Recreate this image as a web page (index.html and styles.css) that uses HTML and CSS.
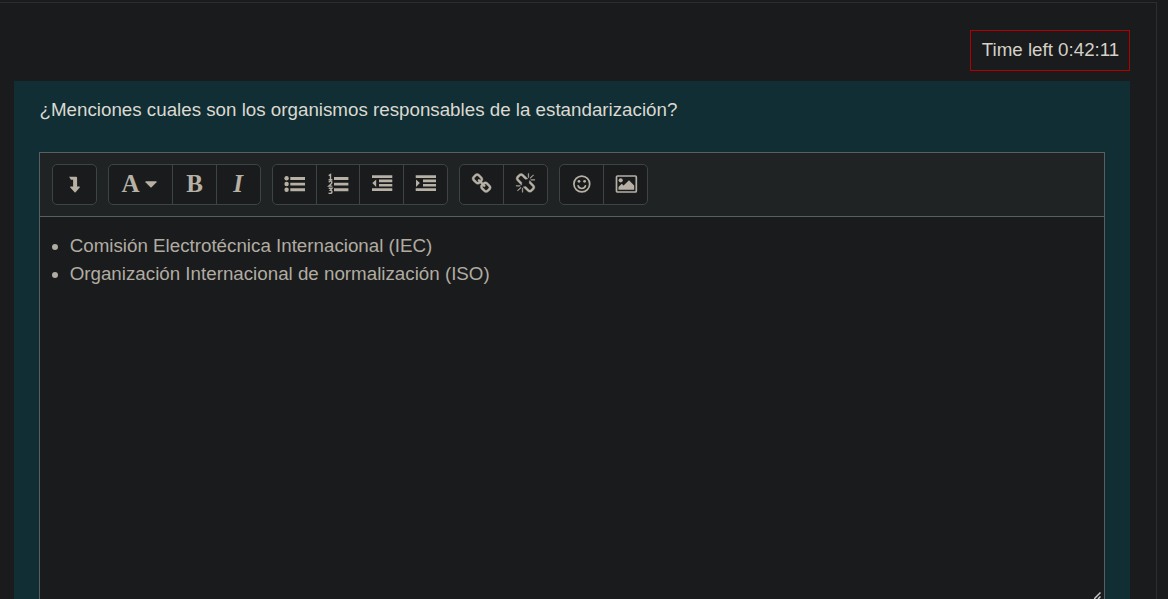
FILE: index.html
```html
<!DOCTYPE html>
<html lang="es">
<head>
<meta charset="utf-8">
<title>Quiz</title>
<link rel="stylesheet" href="styles.css">
</head>
<body>
<main class="page">
  <div class="timer-row"><div class="timer">Time left 0:42:11</div></div>
  <section class="question">
    <p class="prompt">¿Menciones cuales son los organismos responsables de la estandarización?</p>
    <div class="editor">
      <div class="toolbar">
        <div class="group">
          <button class="tool"><svg class="icon" viewBox="0 0 23 23"><path transform="translate(-.9 -.2)" d="M7 4h7q1 0 1 1v8.800h2.200q1 .2.4 1l-4.100 4.600q-.5.5-1 0L8.200 14.800q-.5-.8.4-1H11V6.900H8.800z"/></svg></button>
        </div>
        <div class="group">
          <button class="tool style-menu"><span class="letter">A</span><svg class="caret" viewBox="0 0 12 7"><path d="M.8.300h10.500q.6.300.2.900L6.600 6.200q-.6.5-1.200 0L.500 1.200Q.1.600.8.300z"/></svg></button>
          <button class="tool text-tool"><span class="letter">B</span></button>
          <button class="tool text-tool"><span class="letter italic">I</span></button>
        </div>
        <div class="group">
          <button class="tool"><svg class="icon" viewBox="0 0 23 23"><circle cx="3.600" cy="5.300" r="2.200"/><circle cx="3.600" cy="11" r="2.200"/><circle cx="3.600" cy="16.700" r="2.200"/><path d="M7.300 4h14.700v2.900H7.300zM7.300 9.700h14.700v2.900H7.300zM7.300 15.300h14.700v2.900H7.300z"/></svg></button>
          <button class="tool narrow"><svg class="icon" viewBox="0 0 23 23"><path d="M7 4h14.400v2.900H7zM7 9.700h14.400v2.900H7zM7 15.300h14.400v2.900H7z"/><path class="digits" d="M1.700 2.700 3.500 1.600V6.500M1.600 6.700h3.800M1.700 9.200Q3.600 7.400 4.800 8.700 5.400 10 1.900 13.100H5.300M1.700 15.300H5L3.300 17.300Q5.100 17.400 5 19 4.500 21 1.500 20.100"/></svg></button>
          <button class="tool"><svg class="icon" viewBox="0 0 23 23"><path d="M2 2.300h20.300v2.700H2zM9 6.600h13.300v2.700H9zM9 10.900h13.300v2.700H9zM2 15.200h20.300v2.700H2zM6.200 6.400v7.500L2.300 10.100z"/></svg></button>
          <button class="tool"><svg class="icon" viewBox="0 0 23 23"><path d="M1.700 2.300H22v2.700H1.700zM9 6.600h13v2.700H9zM9 10.900h13v2.700H9zM1.700 15.200H22v2.700H1.700zM2 6.400v7.500l3.900-3.800z"/></svg></button>
        </div>
        <div class="group">
          <button class="tool"><svg class="icon chain" viewBox="0 0 23 23"><path transform="translate(1.900 .3) scale(.0117)" d="M1456 1216q0-40-28-68l-208-208q-28-28-68-28-42 0-72 32 3 3 19 18.500t21.500 21.500 15 19 13 25.500 3.500 27.500q0 40-28 68t-68 28q-15 0-27.500-3.500t-25.500-13-19-15-21.500-21.500-18.500-19q-33 31-33 73 0 40 28 68l206 207q27 27 68 27 40 0 68-26l147-146q28-28 28-67zM753 511q0-40-28-68l-206-207q-28-28-68-28-39 0-68 27l-147 146q-28 28-28 67 0 40 28 68l208 208q27 27 68 27 42 0 72-31-3-3-19-18.500t-21.500-21.500-15-19-13-25.500-3.500-27.500q0-40 28-68t68-28q15 0 27.500 3.500t25.500 13 19 15 21.500 21.500 18.500 19q33-31 33-73zM1648 1216q0 120-85 203l-147 146q-83 83-203 83-121 0-204-85l-206-207q-83-83-83-203 0-123 88-209l-88-88q-86 88-208 88-120 0-204-84l-208-208q-84-84-84-204t85-203l147-146q83-83 203-83 121 0 204 85l206 207q83 83 83 203 0 123-88 209l88 88q86-88 208-88 120 0 204 84l208 208q84 84 84 204z"/></svg></button>
          <button class="tool"><svg class="icon chain" viewBox="0 0 23 23"><path transform="translate(1.200 .3) scale(.0115)" d="M503 1271l-256 256q-10 9-23 9-12 0-23-9-9-10-9-23t9-23l256-256q10-9 23-9t23 9q9 10 9 23t-9 23zm169 41v320q0 14-9 23t-23 9-23-9-9-23v-320q0-14 9-23t23-9 23 9 9 23zm-224-224q0 14-9 23t-23 9h-320q-14 0-23-9t-9-23 9-23 23-9h320q14 0 23 9t9 23zm1264 128q0 120-85 203l-147 146q-83 83-203 83-121 0-204-85l-334-335q-21-21-42-56l239-18 273 274q28 28 68 27.500t68-27.500l147-146q28-28 28-67 0-40-28-68l-274-275 18-239q35 21 56 42l336 336q84 86 84 204zm-617-724l-239 18-273-274q-28-28-68-28-39 0-68 27l-147 146q-28 28-28 67 0 40 28 68l274 274-18 240q-35-21-56-42l-336-336q-84-86-84-204 0-120 85-203l147-146q83-83 203-83 121 0 204 85l334 335q21 21 42 56zm633 84q0 14-9 23t-23 9h-320q-14 0-23-9t-9-23 9-23 23-9h320q14 0 23 9t9 23zm-544-544v320q0 14-9 23t-23 9-23-9-9-23v-320q0-14 9-23t23-9 23 9 9 23zm407 151l-256 256q-11 9-23 9t-23-9q-9-10-9-23t9-23l256-256q10-9 23-9t23 9q9 10 9 23t-9 23z"/></svg></button>
        </div>
        <div class="group">
          <button class="tool"><svg class="icon" viewBox="0 0 23 23"><circle class="line" cx="11.800" cy="11" r="7.900"/><circle cx="9" cy="8.300" r="1.400"/><circle cx="14.600" cy="8.300" r="1.400"/><path class="line" d="M8.100 12.800Q9 15.500 11.800 15.500T15.500 12.800"/></svg></button>
          <button class="tool"><svg class="icon" viewBox="0 0 23 23"><rect class="line" x="2.500" y="3" width="19.800" height="16" rx="1"/><circle cx="6.700" cy="7.300" r="2.100"/><path d="M4.500 16.700V14l3.200-3.200 1.900 1.800 5.400-5.300 5.200 5.200v4.200z"/></svg></button>
        </div>
      </div>
      <div class="content">
        <ul class="answers">
          <li>Comisión Electrotécnica Internacional (IEC)</li>
          <li>Organización Internacional de normalización (ISO)</li>
        </ul>
        <svg class="grip" viewBox="0 0 7 7"><path d="M0 7 6.500.5M4 7 6.500 4.500"/></svg>
      </div>
    </div>
  </section>
</main>
</body>
</html>
```
FILE: styles.css
```css
* { box-sizing: border-box; }
body {
  margin: 0;
  padding-top: 2px;
  height: 599px;
  overflow: hidden;
  background: #1a1b1c;
  color: #d5d1c8;
  font: 18.75px/28px "Liberation Sans", Arial, sans-serif;
}
.page {
  width: 1157px;
  height: 597px;
  padding: 27px 26px 0 14px;
  border: 1px solid #2b2d2e;
  border-left: 0;
  border-bottom: 0;
}
.timer-row { display: flex; justify-content: flex-end; height: 51px; }
.timer {
  width: 160px;
  height: 41px;
  padding: 5px 0 0 1px;
  border: 1px solid #b20000;
  text-align: center;
  white-space: nowrap;
}
.question {
  height: 518px;
  padding: 15px 25px 0;
  background: #102e33;
}
.prompt { margin: 0 0 28px; padding-left: .5px; color: #dcd9d2; }
.editor {
  height: 447px;
  border: 1px solid #566062;
  border-bottom: 0;
  background: #1a1b1c;
}
.toolbar {
  display: flex;
  gap: 11px;
  height: 64px;
  padding: 11px 12px;
  background: #1f2324;
  border-bottom: 1px solid #566062;
}
.group {
  display: flex;
  height: 41px;
  border: 1px solid #3d4444;
  border-radius: 5px;
  background: #1a1b1c;
}
.tool {
  display: flex;
  align-items: center;
  width: 43px;
  height: 39px;
  padding: 0 0 0 10px;
  border: 0;
  background: none;
  color: #b6b0a5;
}
.tool + .tool { width: 44px; border-left: 1px solid #3d4444; }
.tool + .tool.narrow { width: 43px; }
.group .tool.narrow + .tool { width: 44px; }
.icon { flex: none; width: 23px; height: 23px; fill: #b6b0a5; overflow: visible; }
.chain { stroke: #b6b0a5; }
.chain path { stroke-width: 28; }
.line { fill: none; stroke: #b6b0a5; stroke-width: 1.700; stroke-linecap: round; }
.digits { fill: none; stroke: #b6b0a5; stroke-width: 1.400; }
.style-menu { width: 63px; gap: 5px; padding-left: 12.500px; }
.caret { width: 12px; height: 7px; fill: #b6b0a5; }
.tool.text-tool { justify-content: center; padding: 0; }
.letter { padding-bottom: 2px; font: bold 25px/25px "Liberation Serif", serif; }
.italic { padding-right: 1px; font-style: italic; }
.content { position: relative; height: 382px; padding: 15px 12px; }
.answers { margin: 0; padding-left: 17.700px; color: #b1aca2; }
.grip {
  position: absolute;
  right: 3px;
  bottom: 0;
  width: 7px;
  height: 7px;
  fill: none;
  stroke: #c8c8c8;
  stroke-width: 1.500;
}
```
